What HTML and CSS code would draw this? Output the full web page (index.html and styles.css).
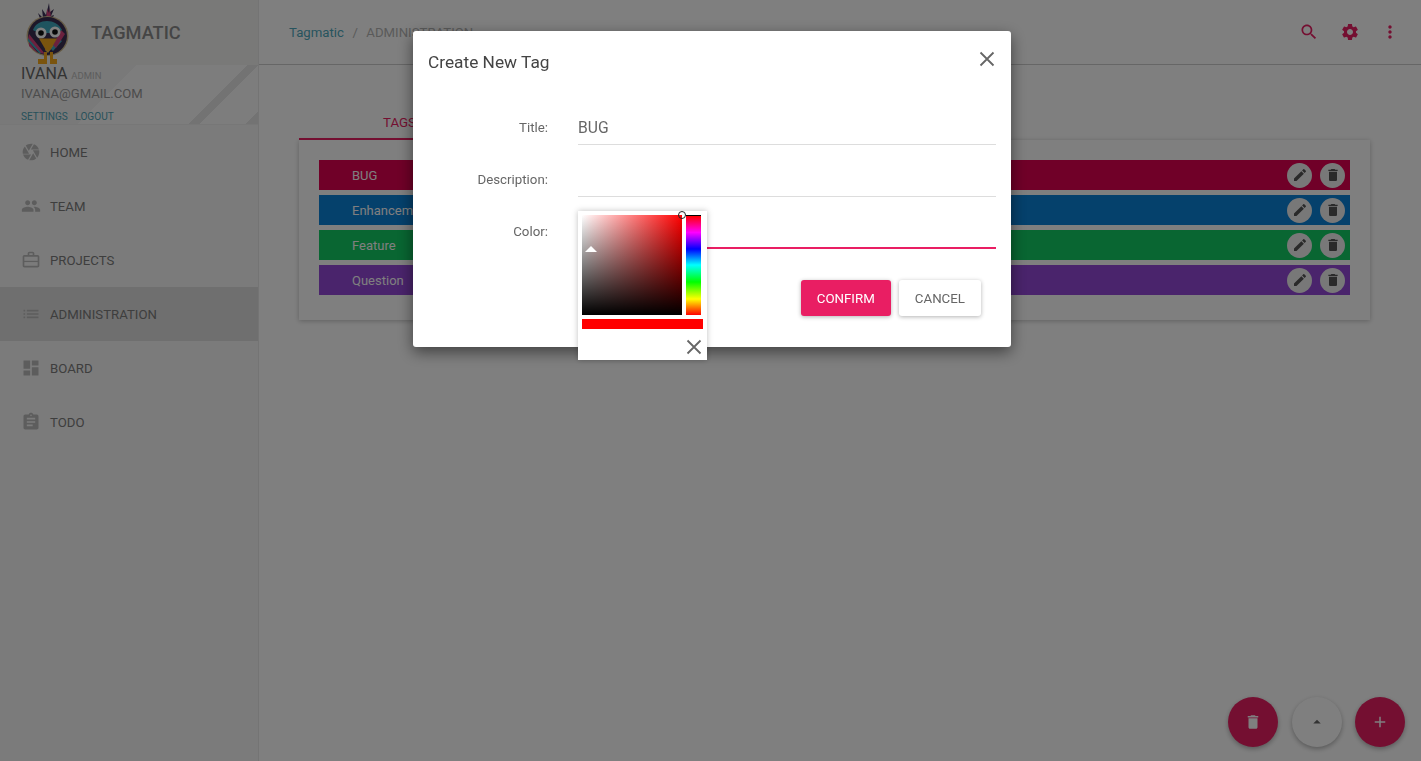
FILE: index.html
```html
<!DOCTYPE html>
<html lang="en">
<head>
<meta charset="utf-8">
<title>Tagmatic</title>
<link rel="stylesheet" href="styles.css">
</head>
<body>
<svg class="defs" aria-hidden="true">
  <symbol id="i-home" viewBox="0 0 24 24"><path d="M9.4 10.5l4.77-8.26C13.47 2.09 12.75 2 12 2c-2.4 0-4.6.85-6.32 2.25l3.66 6.35.06-.1zM21.54 9c-.92-2.92-3.15-5.26-6-6.34L11.88 9h9.66zm.26 1h-7.49l.29.5 4.76 8.25C21 16.97 22 14.61 22 12c0-.69-.07-1.35-.2-2zM8.54 12l-3.9-6.75C3.01 7.03 2 9.39 2 12c0 .69.07 1.35.2 2h7.49l-1.15-2zm-6.08 3c.92 2.92 3.15 5.26 6 6.34L12.12 15H2.46zm11.27 0l-3.9 6.76c.7.15 1.42.24 2.17.24 2.4 0 4.6-.85 6.32-2.25l-3.66-6.35-.93 1.6z"/></symbol>
  <symbol id="i-team" viewBox="0 0 24 24"><path d="M16 11c1.66 0 2.99-1.34 2.99-3S17.66 5 16 5c-1.66 0-3 1.34-3 3s1.34 3 3 3zm-8 0c1.66 0 2.99-1.34 2.99-3S9.66 5 8 5C6.34 5 5 6.34 5 8s1.34 3 3 3zm0 2c-2.33 0-7 1.17-7 3.5V19h14v-2.5c0-2.33-4.67-3.5-7-3.5zm8 0c-.29 0-.62.02-.97.05 1.16.84 1.97 1.97 1.97 3.45V19h6v-2.5c0-2.33-4.67-3.5-7-3.5z"/></symbol>
  <symbol id="i-work" viewBox="0 0 24 24"><path d="M14 6V4h-4v2h4zM4 8v11h16V8H4zm16-2c1.11 0 2 .89 2 2v11c0 1.11-.89 2-2 2H4c-1.11 0-2-.89-2-2l.01-11c0-1.11.88-2 1.99-2h4V4c0-1.11.89-2 2-2h4c1.11 0 2 .89 2 2v2h4z"/><path d="M3 13h18v1.500H3z"/></symbol>
  <symbol id="i-list" viewBox="0 0 24 24"><path d="M3 13h2v-2H3v2zm0 4h2v-2H3v2zm0-8h2V7H3v2zm4 4h14v-2H7v2zm0 4h14v-2H7v2zM7 7v2h14V7H7z"/></symbol>
  <symbol id="i-board" viewBox="0 0 24 24"><path d="M3 13h8V3H3v10zm0 8h8v-6H3v6zm10 0h8V11h-8v10zm0-18v6h8V3h-8z"/></symbol>
  <symbol id="i-todo" viewBox="0 0 24 24"><path d="M19 3h-4.18C14.4 1.84 13.3 1 12 1c-1.3 0-2.4.84-2.82 2H5c-1.1 0-2 .9-2 2v14c0 1.1.9 2 2 2h14c1.1 0 2-.9 2-2V5c0-1.1-.9-2-2-2zm-7 0c.55 0 1 .45 1 1s-.45 1-1 1-1-.45-1-1 .45-1 1-1zm2 14H7v-2h7v2zm3-4H7v-2h10v2zm0-4H7V7h10v2z"/></symbol>
  <symbol id="i-search" viewBox="0 0 24 24"><path d="M15.5 14h-.79l-.28-.27C15.41 12.59 16 11.11 16 9.5 16 5.91 13.09 3 9.5 3S3 5.91 3 9.5 5.91 16 9.5 16c1.61 0 3.09-.59 4.23-1.57l.27.28v.79l5 4.99L20.49 19l-4.99-5zm-6 0C7.01 14 5 11.99 5 9.5S7.01 5 9.5 5 14 7.01 14 9.5 11.99 14 9.5 14z"/></symbol>
  <symbol id="i-gear" viewBox="0 0 24 24"><path d="M19.14 12.94c.04-.3.06-.61.06-.94 0-.32-.02-.64-.07-.94l2.03-1.58c.18-.14.23-.41.12-.61l-1.92-3.32c-.12-.22-.37-.29-.59-.22l-2.39.96c-.5-.38-1.03-.7-1.62-.94l-.36-2.54c-.04-.24-.24-.41-.48-.41h-3.84c-.24 0-.43.17-.47.41l-.36 2.54c-.59.24-1.13.57-1.62.94l-2.39-.96c-.22-.08-.47 0-.59.22L2.74 8.87c-.12.21-.08.47.12.61l2.03 1.58c-.05.3-.09.63-.09.94s.02.64.07.94l-2.03 1.58c-.18.14-.23.41-.12.61l1.92 3.32c.12.22.37.29.59.22l2.39-.96c.5.38 1.03.7 1.62.94l.36 2.54c.05.24.24.41.48.41h3.84c.24 0 .44-.17.47-.41l.36-2.54c.59-.24 1.13-.56 1.62-.94l2.39.96c.22.08.47 0 .59-.22l1.92-3.32c.12-.22.07-.47-.12-.61l-2.01-1.58zM12 15.6c-1.98 0-3.6-1.62-3.6-3.6s1.62-3.6 3.6-3.6 3.6 1.62 3.6 3.6-1.62 3.6-3.6 3.6z"/></symbol>
  <symbol id="i-dots" viewBox="0 0 24 24"><path d="M12 8c1.1 0 2-.9 2-2s-.9-2-2-2-2 .9-2 2 .9 2 2 2zm0 2c-1.1 0-2 .9-2 2s.9 2 2 2 2-.9 2-2-.9-2-2-2zm0 6c-1.1 0-2 .9-2 2s.9 2 2 2 2-.9 2-2-.9-2-2-2z"/></symbol>
  <symbol id="i-edit" viewBox="0 0 24 24"><path d="M3 17.25V21h3.75L17.81 9.94l-3.75-3.75L3 17.25zM20.71 7.04c.39-.39.39-1.02 0-1.41l-2.34-2.34c-.39-.39-1.02-.39-1.41 0l-1.83 1.83 3.75 3.75 1.83-1.83z"/></symbol>
  <symbol id="i-trash" viewBox="0 0 24 24"><path d="M6 19c0 1.1.9 2 2 2h8c1.1 0 2-.9 2-2V7H6v12zM19 4h-3.5l-1-1h-5l-1 1H5v2h14V4z"/></symbol>
  <symbol id="i-add" viewBox="0 0 24 24"><path d="M19 13h-6v6h-2v-6H5v-2h6V5h2v6h6v2z"/></symbol>
  <symbol id="i-up" viewBox="0 0 24 24"><path d="M7 14l5-5 5 5z"/></symbol>
  <symbol id="i-x" viewBox="0 0 16 16"><path d="M1.500 1.500l13 13M14.500 1.500l-13 13" fill="none" stroke="currentColor" stroke-width="1.800"/></symbol>
</svg>

<div class="app">
  <aside class="sidebar">
    <div class="brand">
      <svg class="logo" viewBox="25 2 44 62" aria-hidden="true">
        <path d="M42 24l-4-11 5 5-1-9 4 6 3-12 1 9 4-3-3 7 3-1-4 9z" fill="#3d3358"/>
        <path d="M46 20l1-11 2 4 1-5 1 11z" fill="#d6437c"/>
        <ellipse cx="47.500" cy="36" rx="21" ry="20" fill="#cdb98e"/>
        <ellipse cx="47.500" cy="36" rx="19.500" ry="19" fill="#3a2f52"/>
        <path d="M29 34l16 20-5-1-12-14zM29 42l9 11-3-2-6-5z" fill="#d6437c"/>
        <path d="M28 38l13 15-2 0-11-12zM58 38l4 3-9 10-3-3z" fill="#3fa9bf"/>
        <path d="M61 30l4 4-9 14-3-3z" fill="#d6437c"/>
        <path d="M50 43l3 3-5 7-3-3z" fill="#e8c24a"/>
        <path d="M33 30c2-6 8-9 14-9s12 3 15 9c-5 4-24 4-29 0z" fill="#3fa9bf"/>
        <circle cx="41" cy="33" r="5.500" fill="#fff"/>
        <circle cx="55" cy="32" r="5.500" fill="#fff"/>
        <circle cx="41" cy="33" r="2.800" fill="#111"/>
        <circle cx="55" cy="32" r="2.800" fill="#111"/>
        <path d="M39 38.500h18l-7 12h-4z" fill="#f5a81c"/>
        <path d="M44 52v7h-6v5h9v-12zM50 52v12h7v-5h-4v-7z" fill="#f5a81c"/>
      </svg>
      <span class="brand-name">TAGMATIC</span>
    </div>
    <div class="profile">
      <div class="profile-name">IVANA <small>ADMIN</small></div>
      <div class="profile-mail">IVANA@GMAIL.COM</div>
      <div class="profile-links"><a>SETTINGS</a><a>LOGOUT</a></div>
    </div>
    <nav class="nav">
      <a class="nav-item"><svg><use href="#i-home"/></svg>HOME</a>
      <a class="nav-item"><svg><use href="#i-team"/></svg>TEAM</a>
      <a class="nav-item"><svg><use href="#i-work"/></svg>PROJECTS</a>
      <a class="nav-item is-active"><svg><use href="#i-list"/></svg>ADMINISTRATION</a>
      <a class="nav-item"><svg><use href="#i-board"/></svg>BOARD</a>
      <a class="nav-item"><svg><use href="#i-todo"/></svg>TODO</a>
    </nav>
  </aside>

  <main class="main">
    <header class="topbar">
      <div class="crumbs"><a>Tagmatic</a><span class="sep">/</span><span>ADMINISTRATION</span></div>
      <div class="top-icons">
        <svg><use href="#i-search"/></svg>
        <svg><use href="#i-gear"/></svg>
        <svg><use href="#i-dots"/></svg>
      </div>
    </header>
    <section class="content">
      <div class="tabs"><div class="tab">TAGS</div></div>
      <div class="card">
        <div class="tag tag-bug"><span>BUG</span><div class="tag-actions"><button><svg><use href="#i-edit"/></svg></button><button><svg><use href="#i-trash"/></svg></button></div></div>
        <div class="tag tag-enh"><span>Enhancement</span><div class="tag-actions"><button><svg><use href="#i-edit"/></svg></button><button><svg><use href="#i-trash"/></svg></button></div></div>
        <div class="tag tag-fea"><span>Feature</span><div class="tag-actions"><button><svg><use href="#i-edit"/></svg></button><button><svg><use href="#i-trash"/></svg></button></div></div>
        <div class="tag tag-que"><span>Question</span><div class="tag-actions"><button><svg><use href="#i-edit"/></svg></button><button><svg><use href="#i-trash"/></svg></button></div></div>
      </div>
    </section>
    <div class="fabs">
      <button class="fab fab-pink"><svg><use href="#i-trash"/></svg></button>
      <button class="fab fab-light"><svg><use href="#i-up"/></svg></button>
      <button class="fab fab-pink"><svg><use href="#i-add"/></svg></button>
    </div>
  </main>
</div>

<div class="backdrop"></div>

<div class="modal">
  <div class="modal-head">
    <h2>Create New Tag</h2>
    <svg class="modal-close"><use href="#i-x"/></svg>
  </div>
  <div class="field"><label>Title:</label><div class="control">BUG</div></div>
  <div class="field"><label>Description:</label><div class="control"></div></div>
  <div class="field"><label>Color:</label><div class="control is-focus"></div></div>
  <div class="modal-actions">
    <button class="btn btn-primary">CONFIRM</button>
    <button class="btn btn-plain">CANCEL</button>
  </div>
  <div class="picker">
    <div class="picker-top">
      <div class="sv"><i class="sv-cursor"></i></div>
      <div class="hue"></div>
    </div>
    <div class="sv-arrow"></div>
    <div class="swatch"></div>
    <div class="picker-foot"><svg><use href="#i-x"/></svg></div>
  </div>
</div>
</body>
</html>
```
FILE: styles.css
```css
* { box-sizing: border-box; }
html, body { margin: 0; height: 100%; overflow: hidden; }
body { font-family: Roboto, "Liberation Sans", sans-serif; background: #fff; color: #555; }
.defs { position: absolute; width: 0; height: 0; }
svg { fill: currentColor; display: block; }

.app { display: flex; height: 761px; }

.sidebar { width: 259px; flex: none; background: #f7f7f7; border-right: 1px solid #e8e8e8; }
.brand { height: 65px; display: flex; align-items: center; padding-left: 25px; background: #f3f3f1; }
.logo { width: 44px; height: 62px; flex: none; }
.brand-name { margin-left: 22px; margin-top: -1px; font-size: 18.200px; font-weight: 500; color: #8a8a8a; }
.profile {
  height: 60px; padding: 0 0 0 21px; border-bottom: 1px solid #eee;
  background: linear-gradient(135deg, #f2f2f2 0 43%, #fbfbfb 43% 78%, #e6e6e6 78% 81.500%, #fbfbfb 81.500% 96%, #e6e6e6 96%);
}
.profile-name { font-size: 16px; line-height: 17px; color: #666; }
.profile-name small { font-size: 9.500px; color: #bbb; margin-left: 0; }
.profile-mail { font-size: 13.100px; line-height: 19px; color: #999; }
.profile-links { display: flex; gap: 7.500px; margin-top: 8px; font-size: 10.100px; line-height: 12px; color: #4fa3b5; }
.nav-item { height: 54px; display: flex; align-items: center; gap: 9px; padding-left: 21px; font-size: 13.200px; font-weight: 400; color: #7c7c7c; }
.nav-item svg { width: 20px; height: 20px; color: #bbb; }
.nav-item.is-active { background: #dfdfdf; }

.main { flex: 1; min-width: 0; }
.topbar { height: 65px; display: flex; align-items: center; justify-content: space-between; padding: 0 16px 0 30px; border-bottom: 1px solid #ccc; }
.crumbs { display: flex; gap: 8.500px; font-size: 13.200px; color: #b5b5b5; }
.crumbs a { color: #4fa9bd; }
.top-icons { display: flex; gap: 10.500px; color: #e91e63; }
.top-icons svg { width: 30px; height: 20px; }

.content { padding: 40px 51px 0 40px; }
.tabs { display: flex; height: 35px; }
.tab { width: 201px; height: 35px; padding-top: 10px; text-align: center; font-size: 13.300px; color: #e91e63; border-bottom: 2px solid #e91e63; }
.card { background: #fff; padding: 20px; box-shadow: 0 1px 5px rgba(0,0,0,.25); display: flex; flex-direction: column; gap: 5px; height: 180px; }
.tag { height: 30px; display: flex; align-items: center; justify-content: space-between; padding: 0 5px 0 33px; font-size: 13px; color: #fff; }
.tag-bug { background: #e00050; }
.tag-enh { background: #0a82d8; }
.tag-fea { background: #12cc64; }
.tag-que { background: #9448d8; }
.tag-actions { display: flex; gap: 8px; }
.tag-actions button { width: 25px; height: 25px; padding: 0; border: 0; border-radius: 50%; background: #f0f0f0; color: #555; display: flex; align-items: center; justify-content: center; }
.tag-actions svg { width: 16px; height: 16px; }

.fabs { position: fixed; right: 16px; bottom: 14px; display: flex; gap: 13.500px; }
.fab { width: 50px; height: 50px; padding: 0; border: 0; border-radius: 50%; display: flex; align-items: center; justify-content: center; box-shadow: 0 2px 5px rgba(0,0,0,.3); }
.fab svg { width: 18px; height: 18px; }
.fab-pink { background: #e91e63; color: #fff; }
.fab-light { background: #fff; color: #666; }

.backdrop { position: fixed; inset: 0; background: rgba(0,0,0,.5); }

.modal { position: fixed; left: 413px; top: 31px; width: 598px; height: 316px; background: #fff; border-radius: 3px; box-shadow: 0 5px 15px rgba(0,0,0,.5); padding: 0 15px; }
.modal-head { height: 78px; padding-bottom: 16px; display: flex; align-items: center; justify-content: space-between; }
.modal-head h2 { margin: 0; font-size: 17.300px; font-weight: 400; color: #444; }
.modal-close { width: 16px; height: 16px; color: #666; margin-right: 1px; margin-top: -6px; }
.field { height: 52px; display: flex; }
.field label { width: 120px; padding-top: 11px; text-align: right; font-size: 13.300px; line-height: 16px; color: #666; }
.control { flex: 1; margin-left: 30px; height: 36px; border-bottom: 1px solid #ddd; font-size: 15.700px; line-height: 38px; color: #666; }
.control.is-focus { border-bottom: 2px solid #e91e63; }
.modal-actions { display: flex; justify-content: flex-end; gap: 8px; padding-right: 15px; margin-top: 15px; }
.btn { height: 36px; border: 0; border-radius: 3px; padding: 0 16px; font: 400 13.300px Roboto, sans-serif; box-shadow: 0 1px 4px rgba(0,0,0,.3); }
.btn-primary { background: #e91e63; color: #fff; }
.btn-plain { background: #fff; color: #666; }

.picker { position: absolute; left: 165px; top: 180px; width: 129px; height: 149px; padding: 4px; background: #fff; box-shadow: 0 0 6px rgba(0,0,0,.25); }
.picker-top { display: flex; gap: 4px; }
.sv { position: relative; width: 100px; height: 100px; background: linear-gradient(to top, #000, transparent), linear-gradient(to right, #fff, #f00); }
.sv-cursor { position: absolute; right: -4px; top: -4px; width: 8px; height: 8px; border: 1px solid #222; border-radius: 50%; }
.hue { width: 15px; height: 100px; background: linear-gradient(to bottom, #000 0 1%, #f00 1%, #f0f 17.500%, #00f 34%, #0ff 50%, #0f0 67%, #ff0 84%, #f00 100%); }
.sv-arrow { position: absolute; left: 7px; top: 35px; width: 0; height: 0; border-left: 6px solid transparent; border-right: 6px solid transparent; border-bottom: 6px solid #fff; }
.swatch { width: 121px; height: 10px; margin-top: 4px; background: #f00; }
.picker-foot { display: flex; justify-content: flex-end; padding: 10px 0 0; }
.picker-foot svg { width: 16px; height: 16px; color: #666; margin-right: 1px; }
```
